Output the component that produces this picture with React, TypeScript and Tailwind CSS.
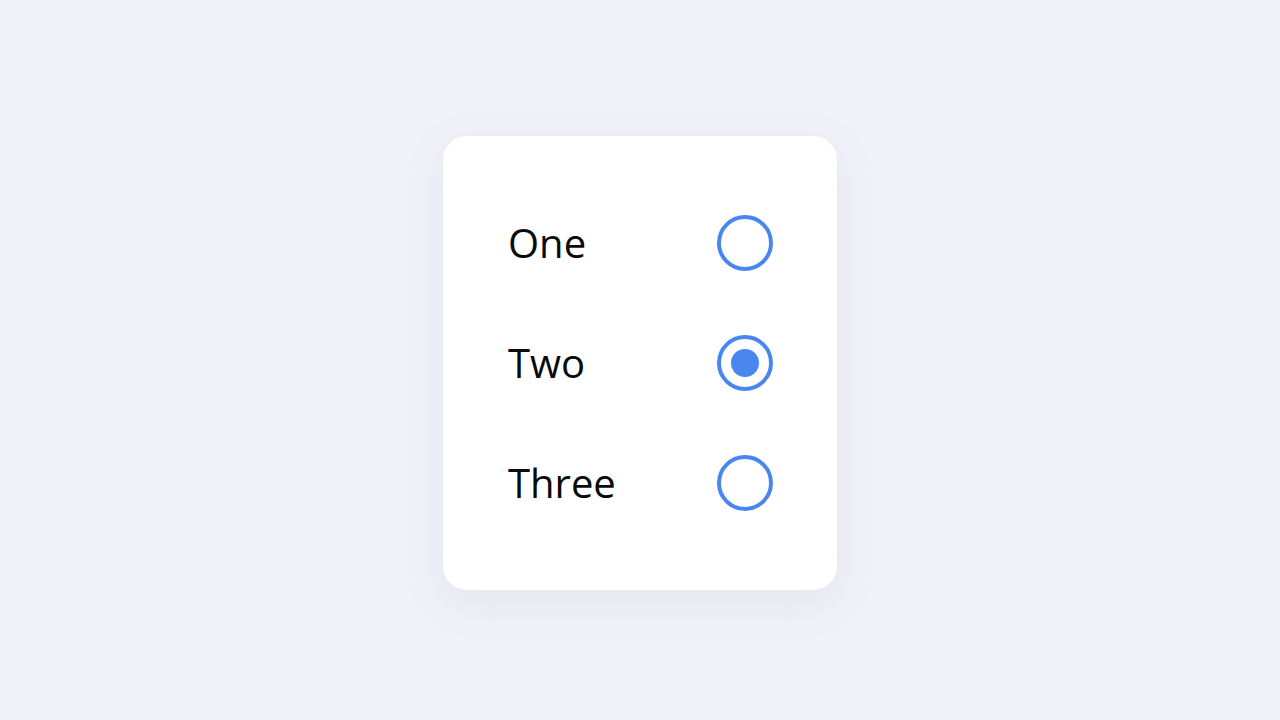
import { useState } from 'react'

const options = ['One', 'Two', 'Three']

export default function App() {
  const [selected, setSelected] = useState('Two')

  return (
    <div className="flex h-[720px] w-full items-center justify-center bg-[#f1f1f8] pt-[6px] font-['Open_Sans',sans-serif]">
      <div className="flex h-[454px] w-[394px] flex-col rounded-[24px] bg-white pl-[65px] pr-[64px] pt-[47px] pb-[47px] shadow-[0_12px_40px_rgba(140,140,190,0.12)]">
        {options.map(opt => {
          const active = opt === selected
          return (
            <label key={opt} className="flex h-[120px] cursor-pointer items-center justify-between">
              <span className="text-[40px] leading-none text-[#0a0a0a]">{opt}</span>
              <button
                type="button"
                onClick={() => setSelected(opt)}
                className="flex h-[56px] w-[56px] items-center justify-center rounded-full border-[4px] border-[#4a86f0] bg-white"
              >
                {active && <span className="h-[28px] w-[28px] rounded-full bg-[#4a86f0]" />}
              </button>
            </label>
          )
        })}
      </div>
    </div>
  )
}
